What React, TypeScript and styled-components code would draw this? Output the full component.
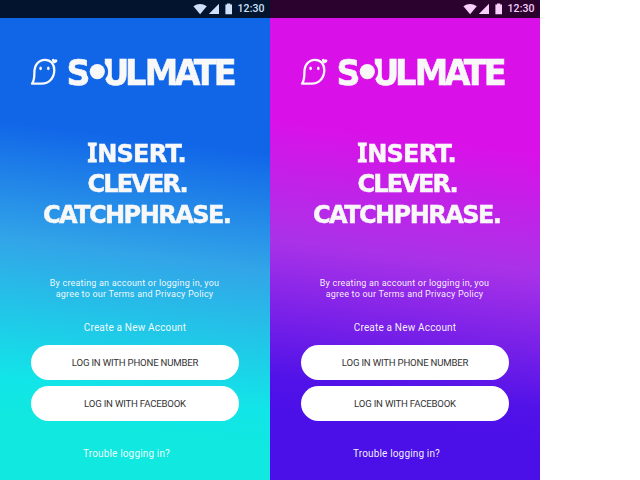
import React from "react";
import styled, { createGlobalStyle } from "styled-components";

const GlobalStyle = createGlobalStyle`
  * { box-sizing: border-box; }
  body { margin: 0; background: #fff; }
`;

type Theme = { id: string; bar: string; ink: string; stops: [string, string, string, string] };

const themes: Theme[] = [
  { id: "ocean", bar: "#02142e", ink: "#cfe0fb", stops: ["#1166e8", "#32a5e8", "#12e5e8", "#10e8e0"] },
  { id: "orchid", bar: "#2b022e", ink: "#f7cffb", stops: ["#d911e8", "#aa32e8", "#5012e8", "#4b0fe8"] },
];

const Page = styled.main`
  display: flex;
  width: 640px;
  height: 480px;
  overflow: hidden;
`;

const Screen = styled.section<{ $stops: Theme["stops"] }>`
  display: flex;
  flex-direction: column;
  width: 270px;
  height: 480px;
  background: linear-gradient(
    187deg,
    ${(p) => p.$stops[0]} 30%,
    ${(p) => p.$stops[1]} 53%,
    ${(p) => p.$stops[2]} 80%,
    ${(p) => p.$stops[3]} 87%
  );
`;

const StatusBar = styled.header<{ $bg: string; $ink: string }>`
  display: flex;
  justify-content: flex-end;
  align-items: center;
  height: 18px;
  padding-right: 4.5px;
  background: ${(p) => p.$bg};
  color: ${(p) => p.$ink};
`;

const StatusIcons = styled.svg`
  width: 40px;
  height: 18px;
  margin-right: 4.5px;
`;

const Clock = styled.span`
  width: 28px;
  font: 500 10.5px/18px Roboto, sans-serif;
  letter-spacing: 0.1px;
  white-space: nowrap;
`;

const Logo = styled.svg`
  width: 210px;
  height: 34px;
  margin: 37px 0 0 29px;
  overflow: visible;
`;

const Wordmark = styled.text`
  font: 700 35.4px "DejaVu Sans", sans-serif;
`;

const Catchphrase = styled.h1`
  display: flex;
  flex-direction: column;
  align-items: center;
  margin: 50px 0 0 2px;
  color: #f8f8f8;
  font: 700 25.3px/30.4px "DejaVu Sans", sans-serif;
  -webkit-text-stroke: 0.5px #f8f8f8;
`;

const PhraseLine = styled.span<{ $spacing: number }>`
  height: 30.4px;
  letter-spacing: ${(p) => p.$spacing}px;
  margin-right: ${(p) => p.$spacing}px;
  white-space: nowrap;
  transform: scaleX(0.95);
`;

const SlabI = styled.span`
  font-family: "Noto Sans", sans-serif;
  font-size: 26px;
  line-height: 1;
  letter-spacing: 0;
  -webkit-text-stroke-width: 0.9px;
`;

const Copy = styled.p<{ $top: number; $size: number; $line: number; $spacing: number; $shift?: number }>`
  margin: ${(p) => p.$top}px 0 0 ${(p) => p.$shift ?? 0}px;
  color: rgba(255, 255, 255, 0.95);
  font: 400 ${(p) => p.$size}px/${(p) => p.$line}px Roboto, sans-serif;
  letter-spacing: ${(p) => p.$spacing}px;
  text-align: center;
  white-space: nowrap;
`;

const Actions = styled.div`
  display: flex;
  flex-direction: column;
  gap: 6px;
  margin: 10px 31px 0;
`;

const LoginButton = styled.button`
  height: 35px;
  padding: 0;
  border: 0;
  border-radius: 18px;
  background: #fff;
  color: #333;
  font: 400 9.6px/35px Roboto, sans-serif;
  letter-spacing: -0.2px;
`;

function SoulmateLogo({ id }: { id: string }) {
  return (
    <Logo viewBox="29 55 210 34" role="img" aria-label="Soulmate">
      <defs>
        <mask id={id} maskUnits="userSpaceOnUse" x="60" y="50" width="180" height="40">
          <rect x="60" y="50" width="180" height="40" fill="#fff" />
          <circle cx="97.3" cy="71.6" r="10.8" fill="#000" />
        </mask>
      </defs>
      <path
        d="M32 83.7C34.4 80.8 34.4 77.5 34.4 72.5C34.4 64.8 38.8 59.8 45 59.8C51 59.8 54.3 64.3 54.3 70C54.3 78.4 48.6 83.6 41.8 83.6Z"
        fill="none"
        stroke="#f8f8f8"
        strokeWidth="2.3"
        strokeLinejoin="round"
      />
      <ellipse cx="40.6" cy="68.4" rx="1.3" ry="1.8" fill="#f8f8f8" />
      <ellipse cx="48.3" cy="68.4" rx="1.3" ry="1.8" fill="#f8f8f8" />
      <path
        d="M53.8 63.5L52 60.9C51.2 59.1 53.5 57.9 54.6 59.7C55.8 58.3 58.2 59.7 57.2 61.5C56.6 62.6 55.1 63.4 53.8 63.5Z"
        fill="#f8f8f8"
      />
      <g mask={`url(#${id})`}>
        <Wordmark
          transform="scale(0.95 1)"
          x="70 107.4 131.7 152.4 183.6 204 225"
          y="84.6"
          fill="#f8f8f8"
          stroke="#f8f8f8"
          strokeWidth="0.6"
        >
          SULMATE
        </Wordmark>
      </g>
      <circle cx="97.3" cy="71.6" r="7.6" fill="#f8f8f8" />
    </Logo>
  );
}

function LoginScreen({ theme }: { theme: Theme }) {
  return (
    <Screen $stops={theme.stops}>
      <StatusBar $bg={theme.bar} $ink={theme.ink}>
        <StatusIcons viewBox="193 0 40 18" fill="currentColor" aria-hidden="true">
          <path d="M193.4 6.3Q200 1.5 206.8 6.3L200.1 14.2Z" />
          <path d="M219 3.8V14H208.8Z" />
          <path d="M225.4 4.4H227V3.4H230.3V4.4H232V14.2H225.4Z" />
        </StatusIcons>
        <Clock>12:30</Clock>
      </StatusBar>
      <SoulmateLogo id={`cut-${theme.id}`} />
      <Catchphrase>
        <PhraseLine $spacing={-0.8}><SlabI>I</SlabI>NSERT.</PhraseLine>
        <PhraseLine $spacing={-2}>CLEVER.</PhraseLine>
        <PhraseLine $spacing={-1.65}>CATCHPHRASE.</PhraseLine>
      </Catchphrase>
      <Copy $top={48} $size={9} $line={11.3} $spacing={0.2} $shift={-1}>
        By creating an account or logging in, you
        <br />
        agree to our Terms and Privacy Policy
      </Copy>
      <Copy $top={20} $size={10} $line={14} $spacing={0.18}>Create a New Account</Copy>
      <Actions>
        <LoginButton>LOG IN WITH PHONE NUMBER</LoginButton>
        <LoginButton>LOG IN WITH FACEBOOK</LoginButton>
      </Actions>
      <Copy $top={26} $size={10} $line={14} $spacing={0.15} $shift={-17}>Trouble logging in?</Copy>
    </Screen>
  );
}

export default function App() {
  return (
    <>
      <GlobalStyle />
      <Page>
        {themes.map((theme) => (
          <LoginScreen key={theme.id} theme={theme} />
        ))}
      </Page>
    </>
  );
}
